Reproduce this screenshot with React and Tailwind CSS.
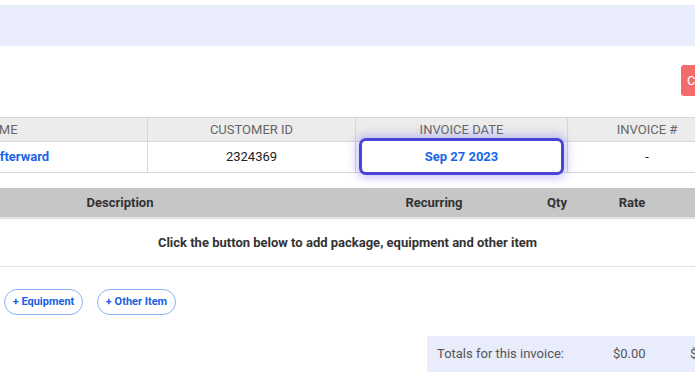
export default function App() {
  return (
    <div className="w-[695px] h-[377px] overflow-hidden bg-white font-['Roboto',sans-serif]">
      <div className="pt-[5px]">
        <div className="h-[41px] bg-[#e9ecfb]" />
      </div>

      {/* action row */}
      <div className="flex justify-end mt-[19px] overflow-hidden">
        <button className="h-[31px] w-[60px] -mr-[46px] rounded-[3px] bg-[#f26c6c] text-white text-[13px] text-left pl-[6px]">
          Cancel
        </button>
      </div>

      {/* invoice info table */}
      <div className="mt-[21px] -ml-[79px] w-[805px] border-y border-[#d6d6d6]">
        <div className="flex h-[24px] bg-[#ececec] text-[13px] text-[#666] uppercase border-b border-[#d6d6d6]">
          <div className="w-[227px] pl-[60px] flex items-center border-r border-[#d6d6d6]">Name</div>
          <div className="w-[208px] flex items-center justify-center border-r border-[#d6d6d6]">Customer ID</div>
          <div className="w-[212px] flex items-center justify-center border-r border-[#d6d6d6]">Invoice Date</div>
          <div className="w-[158px] flex items-center justify-center">Invoice #</div>
        </div>
        <div className="flex h-[30px] text-[13px]">
          <div className="w-[227px] pl-[70px] flex items-center border-r border-[#d6d6d6] font-bold text-[#1a66e8]">
            Afterward
          </div>
          <div className="w-[208px] flex items-center justify-center border-r border-[#d6d6d6] text-[#222]">2324369</div>
          <div className="relative w-[212px] border-r border-[#d6d6d6]">
            <div className="absolute -top-[4px] -bottom-[3px] left-[3px] right-[3px] flex items-center justify-center rounded-[7px] border-[3px] border-[#4b42d6] bg-white font-bold text-[#1a66e8] shadow-[0_0_10px_3px_rgba(99,91,230,0.35)]">
              Sep 27 2023
            </div>
          </div>
          <div className="w-[158px] flex items-center justify-center text-[#222]">-</div>
        </div>
      </div>

      {/* items table */}
      <div className="mt-[15px]">
        <div className="flex h-[31px] items-center bg-[#c6c6c6] border-b-2 border-[#e3e3e3] text-[13px] font-bold text-[#333]">
          <div className="w-[240px] text-center">Description</div>
          <div className="w-[140px]" />
          <div className="w-[108px] text-center">Recurring</div>
          <div className="w-[32px]" />
          <div className="w-[74px] text-center">Qty</div>
          <div className="w-[76px] text-center">Rate</div>
        </div>
        <div className="h-[48px] flex items-center justify-center border-b border-[#e0e0e0] text-[13px] font-bold text-[#333]">
          Click the button below to add package, equipment and other item
        </div>
      </div>

      {/* add buttons */}
      <div className="flex gap-[14px] mt-[22px] pl-[4px]">
        <button className="h-[26px] w-[79px] rounded-full border border-[#8db2f3] text-[11px] font-bold text-[#1a5fe0]">
          + Equipment
        </button>
        <button className="h-[26px] w-[79px] rounded-full border border-[#8db2f3] text-[11px] font-bold text-[#1a5fe0]">
          + Other Item
        </button>
      </div>

      {/* totals */}
      <div className="flex justify-end mt-[21px]">
        <div className="w-[268px] h-[36px] bg-[#e9ecfb] flex items-center text-[13px] text-[#555] pl-[10px] whitespace-nowrap overflow-hidden">
          <span className="w-[176px] shrink-0">Totals for this invoice:</span>
          <span className="w-[77px] shrink-0">$0.00</span>
          <span className="shrink-0">$0.00</span>
        </div>
      </div>
    </div>
  );
}
